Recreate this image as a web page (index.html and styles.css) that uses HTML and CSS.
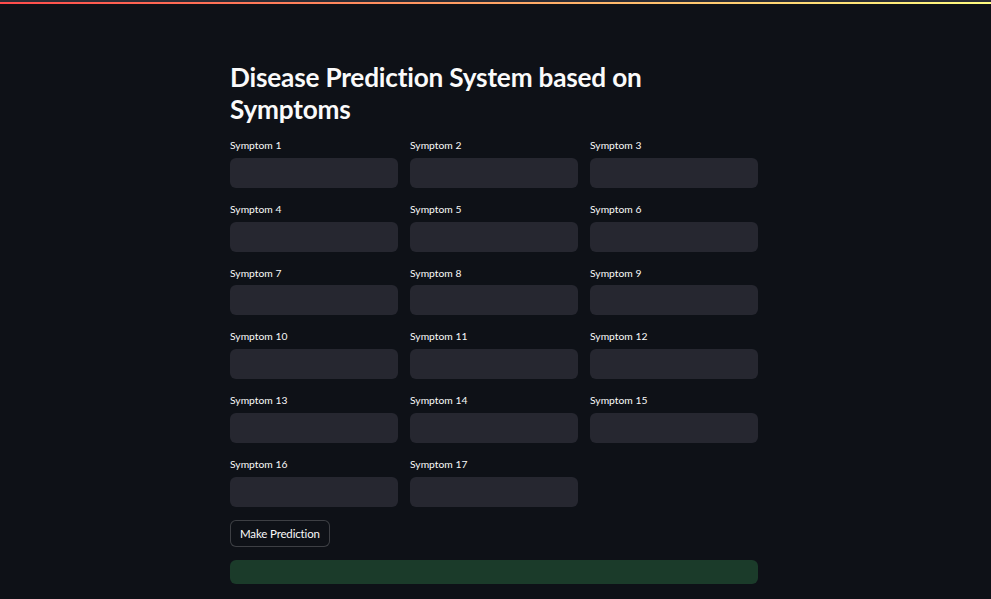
FILE: index.html
```html
<!DOCTYPE html>
<html lang="en">
<head>
<meta charset="utf-8">
<title>Disease Prediction System</title>
<link rel="stylesheet" href="styles.css">
</head>
<body>
<div class="topline"></div>
<div class="decoration"></div>
<main class="main">
  <h2 class="title">Disease Prediction System based on Symptoms</h2>
  <div class="grid">
    <div class="field"><label class="label">Symptom 1</label><div class="input"></div></div>
    <div class="field"><label class="label">Symptom 2</label><div class="input"></div></div>
    <div class="field"><label class="label">Symptom 3</label><div class="input"></div></div>
    <div class="field"><label class="label">Symptom 4</label><div class="input"></div></div>
    <div class="field"><label class="label">Symptom 5</label><div class="input"></div></div>
    <div class="field"><label class="label">Symptom 6</label><div class="input"></div></div>
    <div class="field"><label class="label">Symptom 7</label><div class="input"></div></div>
    <div class="field"><label class="label">Symptom 8</label><div class="input"></div></div>
    <div class="field"><label class="label">Symptom 9</label><div class="input"></div></div>
    <div class="field"><label class="label">Symptom 10</label><div class="input"></div></div>
    <div class="field"><label class="label">Symptom 11</label><div class="input"></div></div>
    <div class="field"><label class="label">Symptom 12</label><div class="input"></div></div>
    <div class="field"><label class="label">Symptom 13</label><div class="input"></div></div>
    <div class="field"><label class="label">Symptom 14</label><div class="input"></div></div>
    <div class="field"><label class="label">Symptom 15</label><div class="input"></div></div>
    <div class="field"><label class="label">Symptom 16</label><div class="input"></div></div>
    <div class="field"><label class="label">Symptom 17</label><div class="input"></div></div>
  </div>
  <div class="actions"><button class="button">Make Prediction</button></div>
  <div class="alert"></div>
</main>
</body>
</html>
```
FILE: styles.css
```css
* { box-sizing: border-box; }
html, body { margin: 0; padding: 0; }
body {
  background: #0e1117;
  color: #fafafa;
  font-family: "Lato", "Open Sans", "Liberation Sans", sans-serif;
  height: 599px;
  overflow: hidden;
}
.topline {
  height: 2px;
  background: #2a2c35;
}
.decoration {
  height: 2px;
  background: linear-gradient(90deg, #ff4b4b, #fffd80);
}
.main {
  width: 528px;
  margin-left: 230px;
  padding-top: 57px;
  display: flex;
  flex-direction: column;
}
.title {
  margin: 0;
  font-size: 26.2px;
  line-height: 32px;
  font-weight: 700;
  letter-spacing: -0.2px;
}
.grid {
  margin-top: 11px;
  display: grid;
  grid-template-columns: repeat(3, 1fr);
  column-gap: 12px;
  row-gap: 12px;
}
.field { display: flex; flex-direction: column; }
.label {
  height: 21.75px;
  padding-top: 1px;
  font-size: 10.3px;
  line-height: 17px;
}
.input {
  height: 30px;
  background: #262730;
  border-radius: 6px;
}
.actions { margin-top: 13px; }
.button {
  height: 27px;
  padding: 0 9px;
  background: #0e1117;
  color: #fafafa;
  border: 1px solid rgba(250,250,250,0.2);
  border-radius: 6px;
  font-family: inherit;
  font-size: 11.5px;
  letter-spacing: -0.15px;
}
.alert {
  margin-top: 13px;
  height: 24px;
  background: #1b3b2a;
  border-radius: 6px;
}
```
